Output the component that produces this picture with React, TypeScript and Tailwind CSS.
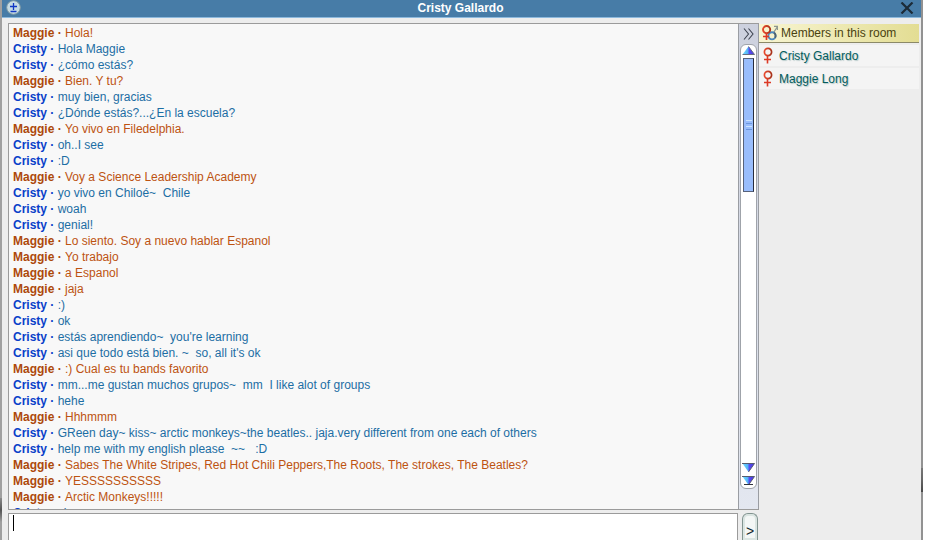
import React from "react";

type Speaker = "Maggie" | "Cristy";

const messages: [Speaker, string][] = [
  ["Maggie", "Hola!"],
  ["Cristy", "Hola Maggie"],
  ["Cristy", "¿cómo estás?"],
  ["Maggie", "Bien. Y tu?"],
  ["Cristy", "muy bien, gracias"],
  ["Cristy", "¿Dónde estás?...¿En la escuela?"],
  ["Maggie", "Yo vivo en Filedelphia."],
  ["Cristy", "oh..I see"],
  ["Cristy", ":D"],
  ["Maggie", "Voy a Science Leadership Academy"],
  ["Cristy", "yo vivo en Chiloé~  Chile"],
  ["Cristy", "woah"],
  ["Cristy", "genial!"],
  ["Maggie", "Lo siento. Soy a nuevo hablar Espanol"],
  ["Maggie", "Yo trabajo"],
  ["Maggie", "a Espanol"],
  ["Maggie", "jaja"],
  ["Cristy", ":)"],
  ["Cristy", "ok"],
  ["Cristy", "estás aprendiendo~  you're learning"],
  ["Cristy", "asi que todo está bien. ~  so, all it's ok"],
  ["Maggie", ":) Cual es tu bands favorito"],
  ["Cristy", "mm...me gustan muchos grupos~  mm  I like alot of groups"],
  ["Cristy", "hehe"],
  ["Maggie", "Hhhmmm"],
  ["Cristy", "GReen day~ kiss~ arctic monkeys~the beatles.. jaja.very different from one each of others"],
  ["Cristy", "help me with my english please  ~~   :D"],
  ["Maggie", "Sabes The White Stripes, Red Hot Chili Peppers,The Roots, The strokes, The Beatles?"],
  ["Maggie", "YESSSSSSSSSS"],
  ["Maggie", "Arctic Monkeys!!!!!"],
  ["Cristy", "si"],
];

function ArrowDefs() {
  return (
    <svg className="absolute size-0" aria-hidden="true">
      <defs>
        <linearGradient id="arrow">
          <stop offset="0" stopColor="#6fe0ff" />
          <stop offset="0.48" stopColor="#55aef5" />
          <stop offset="0.52" stopColor="#5a4cf5" />
          <stop offset="1" stopColor="#4638d8" />
        </linearGradient>
        <linearGradient id="female" x1="0" y1="0" x2="1" y2="0">
          <stop offset="0" stopColor="#e8482c" />
          <stop offset="1" stopColor="#a8331c" />
        </linearGradient>
      </defs>
    </svg>
  );
}

function FemaleIcon() {
  return (
    <svg width="10" height="17" viewBox="0 0 10 17" fill="none" aria-hidden="true">
      <circle cx="5" cy="5" r="3.6" stroke="url(#female)" strokeWidth="1.7" />
      <path d="M4.5 8.6V16.5M1 12.5H8" stroke="#dc3a26" strokeWidth="1.6" />
    </svg>
  );
}

function MembersIcon() {
  return (
    <svg width="17" height="16" viewBox="0 0 17 16" fill="none" aria-hidden="true">
      <path d="M11.6 7.6L15.2 2M12 1.4H15.4V5" stroke="#8d9690" strokeWidth="1.2" />
      <circle cx="10" cy="10.8" r="3.6" stroke="#4a88bd" strokeWidth="1.9" />
      <path d="M12 7.8A3.6 3.6 0 0 1 13 12.8" stroke="#52636b" strokeWidth="1.8" />
      <circle cx="4.6" cy="4.6" r="3.6" stroke="url(#female)" strokeWidth="1.9" />
      <path d="M4.5 8V15M1 11.5H7" stroke="#dc3a26" strokeWidth="1.7" />
    </svg>
  );
}

function DownArrow({ bar = false }: { bar?: boolean }) {
  return (
    <svg width="13" height="10" viewBox="0 0 13 10" aria-hidden="true">
      <path d="M0.5 0.5H12.5L6.5 9Z" fill="url(#arrow)" />
      <path d="M0 0.5H12.5L6.5 9" fill="none" stroke="#555b70" />
      {bar && <path d="M2 8.5H11" stroke="#30343f" />}
    </svg>
  );
}

function Scrollbar() {
  return (
    <div className="flex w-[21px] shrink-0 flex-col items-center border-x border-[#9a9da3] bg-linear-to-b from-[#cdd1de] to-[#e3e7f0]">
      <button aria-label="Collapse members" className="flex h-5 w-full items-center justify-center">
        <svg width="11" height="12" viewBox="0 0 11 12" fill="none" stroke="#3f4551" strokeWidth="1.1" aria-hidden="true">
          <path d="M1 0.5L5.5 6L1 11.5M5.5 0.5L10 6L5.5 11.5" />
        </svg>
      </button>
      <div className="mb-5 flex min-h-0 w-[17px] flex-1 flex-col items-center rounded-md border border-[#9fa3aa] bg-white">
        <button aria-label="Scroll up" className="flex h-[13px] shrink-0 items-start pt-px">
          <svg width="13" height="9" viewBox="0 0 13 9" aria-hidden="true">
            <path d="M0.5 8.5H12.5L6.5 0.5Z" fill="url(#arrow)" />
            <path d="M0.5 8.5H12.5L6.5 0.5" fill="none" stroke="#666c80" />
          </svg>
        </button>
        <div className="flex h-[134px] w-[11px] shrink-0 flex-col items-center justify-center gap-0.5 border border-[#57627b] border-r-[#282d3d] bg-[#99bdfc]">
          <span className="h-px w-1.5 bg-[#cbe4ff]" />
          <span className="h-px w-1.5 bg-[#6c97dd]" />
          <span className="h-px w-1.5 bg-[#cbe4ff]" />
          <span className="h-px w-1.5 bg-[#6c97dd]" />
        </div>
        <div className="flex-1" />
        <button aria-label="Scroll down" className="mb-[3px] flex h-2.5">
          <DownArrow />
        </button>
        <button aria-label="Scroll to end" className="mb-0.5 flex h-2.5">
          <DownArrow bar />
        </button>
      </div>
    </div>
  );
}

function Log() {
  return (
    <ol className="min-w-0 flex-1 overflow-x-hidden overflow-y-auto pt-px pl-1 text-[12px] leading-4 whitespace-pre [scrollbar-width:none]">
      {messages.map(([who, text], i) => (
        <li key={i} className={who === "Maggie" ? "text-[#bd5311]" : "text-[#1c6ea4]"}>
          <b className={who === "Maggie" ? "text-[#ad480b]" : "text-[#0a3fc9]"}>{who} · </b>
          {text}
        </li>
      ))}
    </ol>
  );
}

function Members() {
  return (
    <aside className="w-[162px] shrink-0 pt-px pr-0.5">
      <h2 className="flex h-[19px] items-center gap-0.5 border-b border-[#8b8968] bg-linear-to-r from-[#f8f5d2] to-[#e3dd93] pl-[3px] text-[12px] text-[#4a4210]">
        <MembersIcon />
        Members in this room
      </h2>
      <ul className="flex flex-col gap-0.5 pt-0.5 text-[12px] text-[#045c5c]">
        {["Cristy Gallardo", "Maggie Long"].map((name) => (
          <li key={name} className="flex h-[21px] items-center gap-1.5 bg-[#f4f4f4] pl-1 text-shadow-[1px_1px_1px_#b4c8c8]">
            <FemaleIcon />
            {name}
          </li>
        ))}
      </ul>
    </aside>
  );
}

export default function App() {
  return (
    <div className="relative flex h-screen overflow-hidden bg-white pr-[3px] font-['Liberation_Sans',Arial,sans-serif]">
      <ArrowDefs />
      <main className="flex min-w-0 flex-1 flex-col border-r-2 border-l-2 border-r-[#929292] border-l-[#a0a0a0] bg-[#ededed]">
        <header className="flex h-[18px] shrink-0 items-center justify-between border-b border-[#8db9dd] bg-[#477ca7] pr-[7px] pb-0.5 pl-1">
          <button aria-label="Text size" className="flex">
            <svg width="15" height="15" viewBox="0 0 15 15" aria-hidden="true">
              <circle cx="7.5" cy="7.5" r="6.8" fill="#c6dce4" stroke="#829ba4" />
              <path d="M7.5 3V10M4 6.5H11M4.5 11.5H10.5" stroke="#1239c4" strokeWidth="1.3" />
            </svg>
          </button>
          <h1 className="text-[12px] font-bold text-white">Cristy Gallardo</h1>
          <button aria-label="Close" className="flex">
            <svg width="14" height="12" viewBox="0 0 14 12" stroke="#1c2b38" strokeWidth="2.2" aria-hidden="true">
              <path d="M1.5 0.5L12.5 11.5M12.5 0.5L1.5 11.5" />
            </svg>
          </button>
        </header>
        <div className="flex min-h-0 flex-1 pt-[5px] pl-1.5">
          <div className="flex min-w-0 flex-1 border-y border-l border-[#9b9b9b] bg-[#f8f8f8]">
            <Log />
            <Scrollbar />
          </div>
          <Members />
        </div>
        <form className="flex h-[30px] shrink-0 gap-1 pt-[3px] pr-[163px] pl-1.5" onSubmit={(e) => e.preventDefault()}>
          <div className="relative flex min-w-0 flex-1">
            <input aria-label="Message" className="min-w-0 flex-1 border border-b-0 border-[#9b9b9b] bg-white px-1 text-[12px] outline-none" />
            <span className="absolute top-0.5 left-[5px] h-4 w-px bg-black" />
          </div>
          <button className="w-4 rounded-t-md border border-b-0 border-[#829490] bg-[#f4f7f6] pt-2 text-[14px] leading-4 text-[#10282c] shadow-[inset_0_0_0_2px_#dbe5e2]">
            &gt;
          </button>
        </form>
      </main>
      <span className="absolute bottom-[18px] left-0 h-6 w-0.5 bg-linear-to-b from-[#8a8a8a] via-[#555555] to-[#a0a0a0]" />
      <span className="absolute right-[3px] bottom-12 h-6 w-0.5 bg-linear-to-b from-[#777777] via-[#666666] to-[#484848]" />
    </div>
  );
}
